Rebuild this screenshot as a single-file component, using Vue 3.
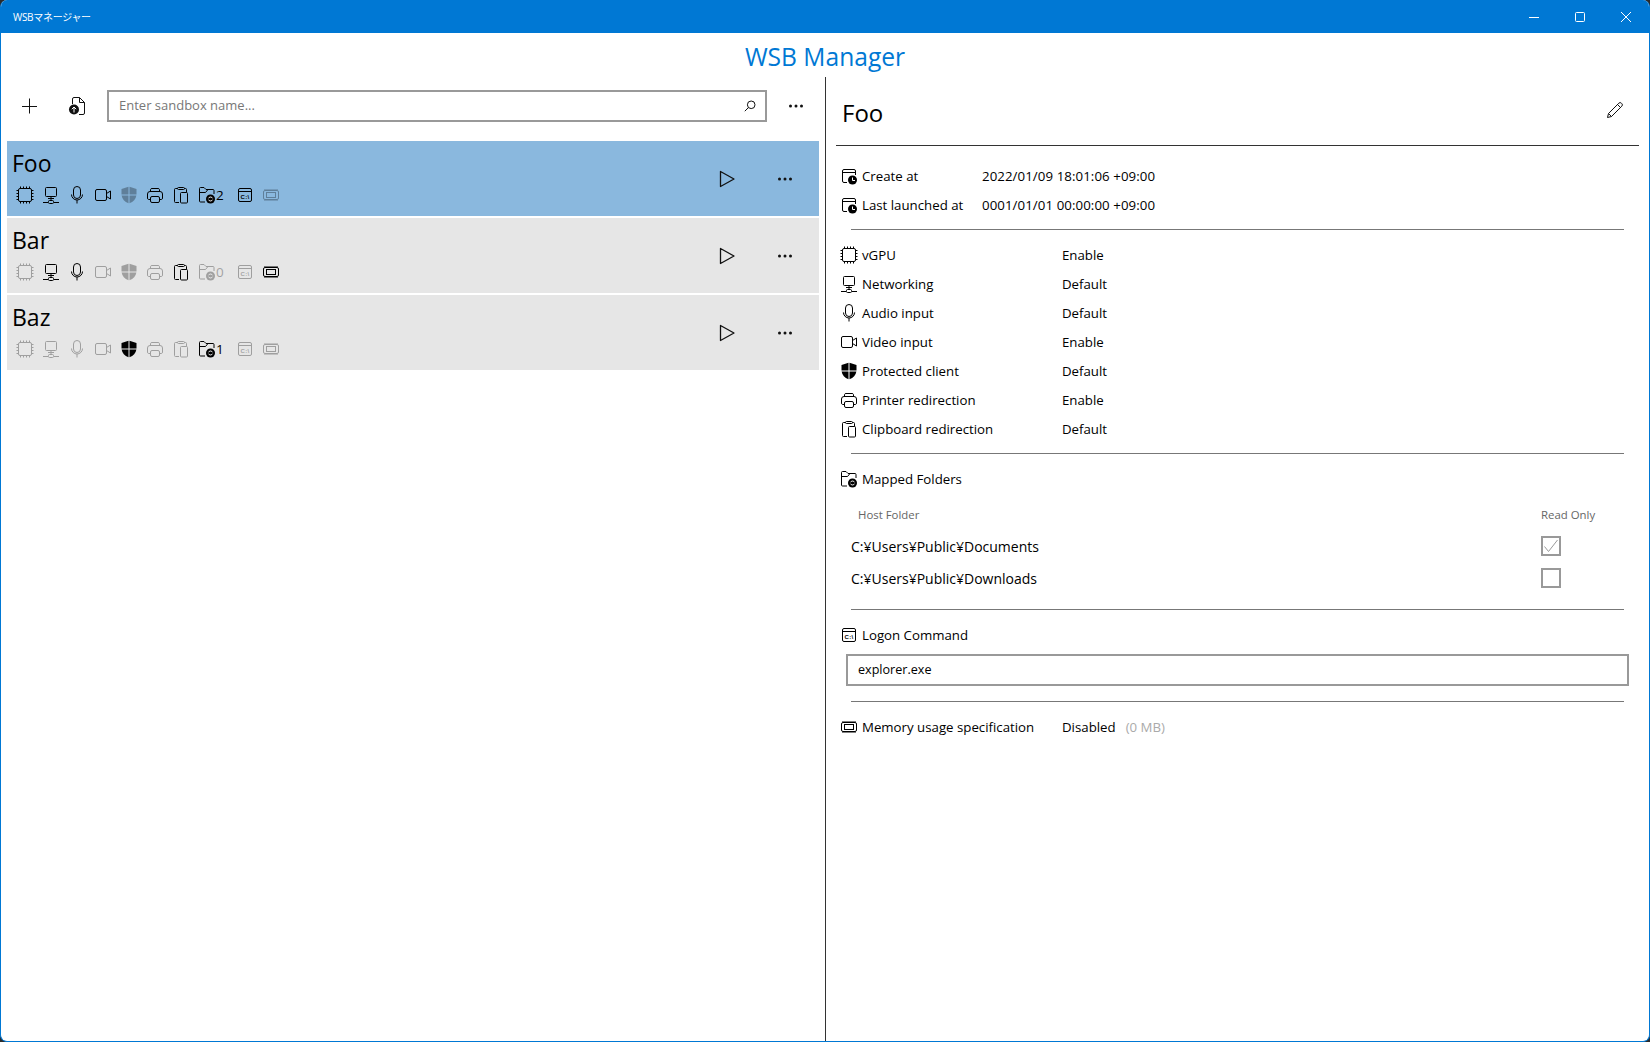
<script setup>
const sandboxes = [
  { name: 'Foo', selected: true, count: 2, on: ['cpu', 'net', 'mic', 'video', 'printer', 'clip', 'folder', 'cmd'] },
  { name: 'Bar', selected: false, count: 0, on: ['net', 'mic', 'clip', 'mem'] },
  { name: 'Baz', selected: false, count: 1, on: ['shield', 'folder'] },
]
const iconOrder = ['cpu', 'net', 'mic', 'video', 'shield', 'printer', 'clip', 'folder', 'cmd', 'mem']
const times = [
  { label: 'Create at', value: '2022/01/09 18:01:06 +09:00' },
  { label: 'Last launched at', value: '0001/01/01 00:00:00 +09:00' },
]
const settings = [
  { icon: 'cpu', label: 'vGPU', value: 'Enable' },
  { icon: 'net', label: 'Networking', value: 'Default' },
  { icon: 'mic', label: 'Audio input', value: 'Default' },
  { icon: 'video', label: 'Video input', value: 'Enable' },
  { icon: 'shield', label: 'Protected client', value: 'Default' },
  { icon: 'printer', label: 'Printer redirection', value: 'Enable' },
  { icon: 'clip', label: 'Clipboard redirection', value: 'Default' },
]
const folders = [
  { path: 'C:¥Users¥Public¥Documents', readOnly: true },
  { path: 'C:¥Users¥Public¥Downloads', readOnly: false },
]
</script>

<template>
  <div class="window">
    <svg class="sprite" aria-hidden="true">
      <defs>
        <symbol id="i-cpu" viewBox="0 0 18 18">
          <rect x="2.500" y="2.500" width="13" height="13" rx="1.500" />
          <path d="M4.500 .5v2M7.500 .5v2M10.500 .5v2M13.500 .5v2M4.500 15.500v2M7.500 15.500v2M10.500 15.500v2M13.500 15.500v2M.5 4.500h2M.5 7.500h2M.5 10.500h2M.5 13.500h2M15.500 4.500h2M15.500 7.500h2M15.500 10.500h2M15.500 13.500h2" />
        </symbol>
        <symbol id="i-net" viewBox="0 0 18 18">
          <rect x="3.500" y="1.500" width="11" height="9" rx="1" />
          <path d="M6 12.500h6M9 10.500v4M1 16.500h5M12 16.500h5" />
          <rect x="6.500" y="14.500" width="5" height="3" rx="1" />
        </symbol>
        <symbol id="i-mic" viewBox="0 0 18 18">
          <rect x="5.500" y=".5" width="7" height="12" rx="3.500" />
          <path d="M3.500 8.500a5.500 5.500 0 0 0 11 0M9 14v3.500" />
        </symbol>
        <symbol id="i-video" viewBox="0 0 18 18">
          <rect x="1.500" y="3.500" width="11" height="11" rx="1.500" />
          <path d="M12.500 7.500l4-2.500v8l-4-2.500" />
        </symbol>
        <symbol id="i-shield" viewBox="0 0 18 18">
          <path class="solid" d="M8.500 .8L1.500 3V8.400H8.500ZM9.500 .8L16.500 3V8.400H9.500ZM1.600 9.400C2.200 12.800 4.600 15.800 8.500 17.200V9.400ZM16.400 9.400C15.800 12.800 13.400 15.800 9.500 17.200V9.400Z" />
        </symbol>
        <symbol id="i-printer" viewBox="0 0 18 18">
          <path d="M4.500 5.500V3.500a1.500 1.500 0 0 1 1.500-1h6a1.500 1.500 0 0 1 1.500 1v2" />
          <path d="M4.500 13.500H2.500A1.500 1.500 0 0 1 1.500 12V8A2.500 2.500 0 0 1 4 5.500h10A2.500 2.500 0 0 1 16.500 8v4a1.500 1.500 0 0 1-1 1.500h-2" />
          <rect x="4.500" y="10.500" width="9" height="6" rx="1.500" />
        </symbol>
        <symbol id="i-clip" viewBox="0 0 18 18">
          <path d="M7 16.500H3.500a1 1 0 0 1-1-1V3.500a1 1 0 0 1 1-1H5.500M12.500 2.500H13.500a1 1 0 0 1 1 1V6.500" />
          <rect x="5.500" y="1.500" width="7" height="2" rx="1" />
          <rect x="8.500" y="6.500" width="7" height="10.500" rx="1" />
        </symbol>
        <symbol id="i-folder" viewBox="0 0 18 18">
          <path d="M7 16H2.500a1 1 0 0 1-1-1V2.500a1 1 0 0 1 1-1H6l2 2h7a1 1 0 0 1 1 1V8M1.500 6.500h6L10 3.500" />
          <circle class="solid" cx="12.500" cy="13" r="4.500" />
          <path class="knock" d="M10.500 12.300a2.200 2.200 0 0 1 4 0M10.500 13.700a2.200 2.200 0 0 0 4 0" />
        </symbol>
        <symbol id="i-cmd" viewBox="0 0 18 18">
          <rect x="2.500" y="2.500" width="13" height="13" rx="1.500" />
          <path d="M2.500 5.500h13" />
          <text x="9" y="13" class="cmd-text" text-anchor="middle">C:\</text>
        </symbol>
        <symbol id="i-mem" viewBox="0 0 18 18">
          <rect x="1.500" y="4.500" width="15" height="9" rx="1.500" />
          <rect x="4.500" y="6.500" width="9" height="5" />
          <path d="M3 3V4.500M5 3V4.500M7 3V4.500M9 3V4.500M11 3V4.500M13 3V4.500M15 3V4.500M3 13.500V15M5 13.500V15M7 13.500V15M9 13.500V15M11 13.500V15M13 13.500V15M15 13.500V15" />
        </symbol>
        <symbol id="i-clock" viewBox="0 0 18 18">
          <path d="M7 15.500H4A1.500 1.500 0 0 1 2.500 14V4A1.500 1.500 0 0 1 4 2.500h10A1.500 1.500 0 0 1 15.500 4V8M2.500 5.500h13" />
          <circle class="solid" cx="12.500" cy="13" r="4.500" />
          <path class="knock" d="M12.500 10.500V13.500H15" />
        </symbol>
        <symbol id="i-dots" viewBox="0 0 14 14">
          <circle class="solid" cx="1.500" cy="7" r="1.500" />
          <circle class="solid" cx="7" cy="7" r="1.500" />
          <circle class="solid" cx="12.500" cy="7" r="1.500" />
        </symbol>
      </defs>
    </svg>

    <header class="titlebar">
      <span class="titlebar-text">WSBマネージャー</span>
      <div class="caption">
        <svg class="cap-icon" viewBox="0 0 10 10"><path d="M0 5.500h10" /></svg>
        <svg class="cap-icon" viewBox="0 0 10 10"><rect x=".5" y=".5" width="9" height="9" rx="1" /></svg>
        <svg class="cap-icon" viewBox="0 0 10 10"><path d="M0 0l10 10M10 0L0 10" /></svg>
      </div>
    </header>

    <h1 class="app-title">WSB Manager</h1>

    <main class="main">
      <section class="left">
        <div class="toolbar">
          <button class="tool-btn">
            <svg class="line-icon" width="18" height="18" viewBox="0 0 18 18"><path d="M9.500 1.500v15M2 9.500h15" /></svg>
          </button>
          <button class="tool-btn">
            <svg class="line-icon" width="18" height="18" viewBox="0 0 18 18">
              <path d="M4.500 7V2A1.500 1.500 0 0 1 6 .5h5.500l5 5V16a1.500 1.500 0 0 1-1.500 1.500h-4M11.500 .5V5.500h5" />
              <circle class="solid" cx="6" cy="12.500" r="5" />
              <path class="knock" d="M6 15.500V10M3.800 12.200L6 10l2.200 2.200" />
            </svg>
          </button>
          <div class="search field">
            <input class="field-input search-input" placeholder="Enter sandbox name..." />
            <svg class="search-icon line-icon" width="12" height="12" viewBox="0 0 12 12">
              <circle cx="7.200" cy="4.800" r="3.800" />
              <path d="M4.500 7.500L.8 11.200" />
            </svg>
          </div>
          <button class="more-btn">
            <svg class="dots"><use href="#i-dots" /></svg>
          </button>
        </div>

        <div class="list">
          <article
            v-for="box in sandboxes"
            :key="box.name"
            class="item"
            :class="{ selected: box.selected }"
          >
            <div class="item-main">
              <div class="item-name">{{ box.name }}</div>
              <div class="item-icons">
                <div
                  v-for="ic in iconOrder"
                  :key="ic"
                  class="cell"
                  :class="{ dim: !box.on.includes(ic), wide: ic === 'folder' }"
                >
                  <svg class="icon"><use :href="'#i-' + ic" /></svg>
                  <span v-if="ic === 'folder'" class="count">{{ box.count }}</span>
                </div>
              </div>
            </div>
            <button class="more-btn">
              <svg class="line-icon play" width="18" height="18" viewBox="0 0 18 18">
                <path d="M2.500 1.500L16 9 2.500 16.500Z" />
              </svg>
            </button>
            <button class="more-btn">
              <svg class="dots"><use href="#i-dots" /></svg>
            </button>
          </article>
        </div>
      </section>

      <section class="right">
        <div class="detail-head">
          <div class="detail-name">Foo</div>
          <svg class="line-icon pencil" width="18" height="18" viewBox="0 0 18 18">
            <path d="M1.500 16.500l1-4L12.800 2.200a1.800 1.800 0 0 1 2.600 0l.4.4a1.800 1.800 0 0 1 0 2.600L5.500 15.500ZM2.500 12.500l3 3M11.500 3.500l3 3" />
          </svg>
        </div>

        <div class="block times">
          <div v-for="t in times" :key="t.label" class="row row-short">
            <svg class="icon"><use href="#i-clock" /></svg>
            <span class="label">{{ t.label }}</span>
            <span class="value">{{ t.value }}</span>
          </div>
        </div>
        <hr class="rule" />

        <div class="block settings">
          <div v-for="s in settings" :key="s.label" class="row">
            <svg class="icon"><use :href="'#i-' + s.icon" /></svg>
            <span class="label">{{ s.label }}</span>
            <span class="value">{{ s.value }}</span>
          </div>
        </div>
        <hr class="rule" />

        <div class="block folders">
          <div class="row heading">
            <svg class="icon"><use href="#i-folder" /></svg>
            <span class="label">Mapped Folders</span>
          </div>
          <div class="table-head">
            <span>Host Folder</span>
            <span class="ro-head">Read Only</span>
          </div>
          <div v-for="f in folders" :key="f.path" class="table-row">
            <span>{{ f.path }}</span>
            <span class="check">
              <svg v-if="f.readOnly" width="16" height="16" viewBox="0 0 16 16"><path d="M1.500 8.500l4 5 9-11.500" /></svg>
            </span>
          </div>
        </div>
        <hr class="rule" />

        <div class="block logon">
          <div class="row heading">
            <svg class="icon"><use href="#i-cmd" /></svg>
            <span class="label">Logon Command</span>
          </div>
          <div class="logon-field field">
            <input class="field-input logon-input" value="explorer.exe" />
          </div>
        </div>
        <hr class="rule" />

        <div class="block memory">
          <div class="row">
            <svg class="icon"><use href="#i-mem" /></svg>
            <span class="label">Memory usage specification</span>
            <span class="value">Disabled</span>
            <span class="mb">(0 MB)</span>
          </div>
        </div>
      </section>
    </main>
  </div>
</template>

<style>
html, body { background: #2b2b2b; }
</style>

<style scoped>
.window {
  width: 1650px;
  height: 1042px;
  box-sizing: border-box;
  display: flex;
  flex-direction: column;
  background: #fff;
  border: 1px solid #0078d4;
  border-top: 0;
  border-radius: 7px;
  overflow: hidden;
  color: #000;
  font-family: "Open Sans", "Noto Sans CJK JP", sans-serif;
  font-size: 13.250px;
}
.sprite { position: absolute; width: 0; height: 0; overflow: hidden; }
.titlebar {
  height: 33px;
  flex: none;
  background: #0078d4;
  color: #fff;
  display: flex;
  align-items: center;
  justify-content: space-between;
  padding-left: 12px;
}
.titlebar-text { font-size: 10px; letter-spacing: -.3px; }
.caption { display: flex; gap: 36px; padding-right: 18px; }
.cap-icon { width: 10px; height: 10px; fill: none; stroke: #fff; stroke-width: 1; }
.app-title {
  margin: 0;
  height: 44px;
  flex: none;
  text-align: center;
  line-height: 48px;
  font-size: 24.600px;
  font-weight: 400;
  color: #0078d4;
}
.main { flex: 1; display: flex; min-height: 0; }
.left {
  width: 825px;
  flex: none;
  box-sizing: border-box;
  border-right: 1px solid #333;
}
.toolbar { display: flex; align-items: center; padding: 13px 0 0 4px; }
.tool-btn, .more-btn {
  border: 0;
  background: none;
  padding: 0;
  display: flex;
  align-items: center;
  justify-content: center;
  flex: none;
}
.tool-btn { width: 48px; height: 32px; }
.more-btn { width: 58px; height: 32px; }
.field {
  box-sizing: border-box;
  height: 32px;
  border: 2px solid #999;
  display: flex;
  align-items: center;
  background: #fff;
}
.search { flex: 1; margin-left: 6px; padding-right: 9px; }
.field-input {
  flex: 1;
  min-width: 0;
  border: 0;
  outline: 0;
  padding: 0 0 0 10px;
  background: none;
  font: inherit;
  color: #000;
}
.search-input { padding-bottom: 2px; font-size: 13px; }
.logon-input { padding-bottom: 1px; font-size: 12.600px; }
.field-input::placeholder { color: #777; opacity: 1; }
.line-icon, .icon {
  fill: none;
  stroke: currentColor;
  stroke-width: 1;
}
.line-icon { color: #111; }
.solid { fill: currentColor; stroke: none; }
.knock { fill: none; stroke: #fff; stroke-width: 1; }
.cmd-text { font-size: 6px; letter-spacing: .3px; fill: currentColor; stroke: none; font-family: "Liberation Sans", sans-serif; font-weight: 700; }
.dots { width: 14px; height: 14px; color: #111; }
.list {
  margin-top: 19px;
  padding: 0 6px;
  display: flex;
  flex-direction: column;
  gap: 2px;
}
.item {
  height: 75px;
  display: flex;
  align-items: center;
  padding-right: 5px;
  background: #e6e6e6;
}
.item.selected { background: #8ab8de; }
.item-main { flex: 1; align-self: flex-start; padding: 6px 0 0 5px; }
.item-name { font-size: 23px; line-height: 32px; }
.item-icons { display: flex; margin-top: 7px; }
.cell {
  width: 26px;
  height: 18px;
  display: flex;
  align-items: center;
  justify-content: center;
  flex: none;
}
.cell.wide { width: 38px; justify-content: flex-start; padding-left: 4px; box-sizing: border-box; }
.cell.dim { opacity: .3; }
.icon { width: 18px; height: 18px; flex: none; }
.count { font-size: 13.500px; line-height: 18px; }
.play { stroke-width: 1.300; stroke-linejoin: round; }

.right { flex: 1; min-width: 0; }
.detail-head {
  height: 65px;
  margin: 0 10px;
  padding: 3px 15px 0 6px;
  display: flex;
  align-items: center;
  justify-content: space-between;
  border-bottom: 1px solid #333;
}
.detail-name { font-size: 24px; }
.pencil { margin-bottom: 5px; }
.block { margin: 0; }
.row {
  height: 29px;
  display: flex;
  align-items: center;
  padding-left: 14px;
}
.row .label { width: 200px; margin-left: 4px; flex: none; }
.row-short .label { width: 120px; }
.row-short .value { letter-spacing: .08px; }
.rule {
  border: 0;
  height: 1px;
  background: #777;
  margin: 0 25px;
}
.times { padding: 15px 0 10px; }
.settings { padding: 10px 0; }
.folders { padding: 10px 0 15px; }
.table-head {
  box-sizing: border-box;
  margin: 7px 0 0 32px;
  height: 30px;
  padding: 0 44px 2px 0;
  display: flex;
  align-items: center;
  justify-content: space-between;
  font-size: 11.400px;
  color: #666;
}
.ro-head { width: 64px; }
.table-row {
  height: 32px;
  margin-left: 25px;
  display: flex;
  align-items: center;
  justify-content: space-between;
  padding-right: 88px;
  font-size: 14px;
}
.check {
  box-sizing: border-box;
  width: 20px;
  height: 20px;
  border: 2px solid #999;
  display: block;
}
.check svg { display: block; fill: none; stroke: #999; stroke-width: 1; }
.logon { padding: 10px 0 15px; }
.logon-field {
  margin: 5px 20px 0;
  height: 32px;
}
.memory { padding-top: 10px; }
.value { flex: none; }
.mb { margin-left: 10px; color: #aaa; }
</style>
